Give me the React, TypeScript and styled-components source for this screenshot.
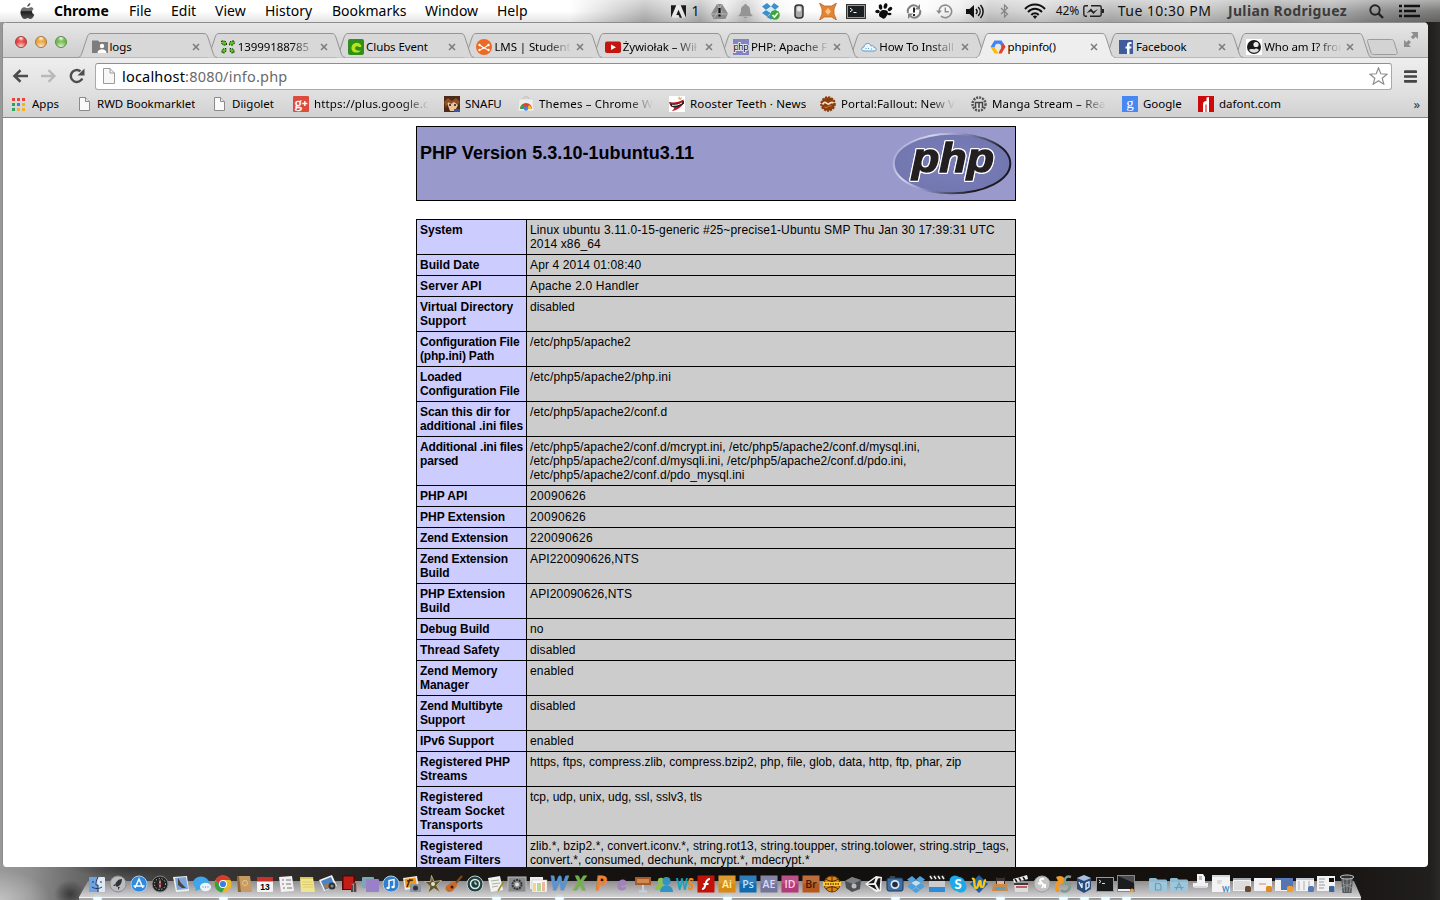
import React from "react";
import styled, { createGlobalStyle, css } from "styled-components";

const GlobalStyle = createGlobalStyle`
  html, body { margin: 0; padding: 0; overflow: hidden; background: #161412; }
  * { box-sizing: border-box; }
`;

const uiFont = `"Noto Sans", "Open Sans", sans-serif`;

/* ---------- desktop ---------- */

const Desktop = styled.div`
  width: 1440px;
  height: 900px;
  overflow: hidden;
  display: flex;
  flex-direction: column;
  font-family: ${uiFont};
  color: #000;
  background:
    radial-gradient(ellipse 16px 14px at 70px 894px, rgba(40, 40, 40, 0.75), transparent),
    radial-gradient(ellipse 60px 10px at 130px 868px, rgba(30, 30, 30, 0.5), transparent),
    radial-gradient(ellipse 50px 30px at 0 900px, rgba(220, 220, 220, 0.6), transparent),
    linear-gradient(90deg, #999 0, #8f8f8f 30px, #6e6e6e 70px, #525252 120px, #3c3b3a 170px, #2e2c2a 300px, #1b1815 440px, #12100e 700px, #14110f 1300px, #211f1d 1430px, #2c2a28 1440px);
`;

const MenuBar = styled.header`
  flex: 0 0 22px;
  height: 22px;
  display: flex;
  align-items: center;
  padding-left: 20px;
  font-size: 14px;
  white-space: nowrap;
  background:
    linear-gradient(180deg, rgba(255, 255, 255, 0.45) 0, rgba(255, 255, 255, 0.12) 50%, rgba(0, 0, 0, 0.1) 100%),
    linear-gradient(90deg, #fff 0, #fff 570px, #e2e2e2 600px, #b4b4b4 645px, #d0d0d0 675px, #b2b2b2 700px, #e8e8e8 725px, #c4c4c4 745px, #f0f0f0 765px, #fff 800px, #fbfbfb 925px, #ececec 960px, #c4c4c4 990px, #d4d4d4 1040px, #b0b0b0 1110px, #c6c6c6 1190px, #9a9a9a 1270px, #a4a4a4 1330px, #868686 1370px, #6c6b6a 1440px);
`;

const MenuItem = styled.span<{ $w: number; $bold?: boolean }>`
  flex: 0 0 ${(p) => p.$w}px;
  height: 22px;
  display: flex;
  align-items: center;
  font-weight: ${(p) => (p.$bold ? 700 : 400)};
  line-height: 22px;
`;

const StatusItem = styled.span<{ $w: number; $size?: number; $color?: string; $bold?: boolean; $ls?: number }>`
  flex: 0 0 ${(p) => p.$w}px;
  min-width: 0;
  display: flex;
  justify-content: center;
  align-items: center;
  height: 22px;
  line-height: 22px;
  font-size: ${(p) => p.$size ?? 14}px;
  font-weight: ${(p) => (p.$bold ? 700 : 400)};
  letter-spacing: ${(p) => p.$ls ?? 0}px;
  color: ${(p) => p.$color ?? "#111"};
  svg { flex: none; }
`;

/* ---------- browser window ---------- */

const BrowserWindow = styled.main`
  flex: 0 0 845px;
  height: 845px;
  width: 1426px;
  margin-left: 2px;
  border-left: 1px solid #8d8d8d;
  border-radius: 5px 5px 4px 4px;
  overflow: hidden;
  display: flex;
  flex-direction: column;
  background: #fff;
`;

const TabStrip = styled.div`
  flex: 0 0 36px;
  display: flex;
  align-items: flex-end;
  border-top: 1px solid #8c8c8c;
  background: linear-gradient(180deg, #e6e6e6, #cdcdcd);
  box-shadow: inset 0 -1px 0 #9a9a9a;
`;

const TrafficLights = styled.div`
  flex: 0 0 75px;
  height: 33px;
  padding-left: 12px;
  display: flex;
  gap: 8px;
  align-items: center;
`;

const Light = styled.span<{ $c: string; $edge: string }>`
  width: 12px;
  height: 12px;
  border-radius: 50%;
  border: 1px solid ${(p) => p.$edge};
  background: radial-gradient(circle at 50% 12%, #fff 0, rgba(255, 255, 255, 0.2) 25%, transparent 40%),
    radial-gradient(circle at 50% 105%, rgba(255, 255, 255, 0.7), ${(p) => p.$c} 55%);
`;

const TabBox = styled.div<{ $z: number }>`
  flex: 0 0 128.3px;
  height: 25px;
  position: relative;
  z-index: ${(p) => p.$z};
  display: flex;
  align-items: center;
  padding: 2px 0 0 13.5px;
`;

const TabShape = styled.svg`
  position: absolute;
  left: 0;
  top: 0;
  overflow: visible;
`;

const Favicon = styled.span`
  position: relative;
  flex: 0 0 16px;
  height: 16px;
  svg { display: block; }
`;

const fade = css`
  mask-image: linear-gradient(90deg, #000 calc(100% - 26px), transparent);
`;

const TabTitle = styled.span<{ $fade?: boolean }>`
  position: relative;
  flex: 0 0 78px;
  margin-left: 2px;
  overflow: hidden;
  white-space: nowrap;
  font-size: 11.5px;
  line-height: 18px;
  letter-spacing: -0.1px;
  ${(p) => p.$fade && fade}
`;

const CloseMark = styled.svg`
  position: relative;
  margin-left: 4px;
`;

const NewTab = styled.svg`
  flex: none;
  margin: 0 0 3px 5.5px;
`;

const FullScreen = styled.svg`
  flex: none;
  margin: 0 0 11px 6px;
`;

const Toolbar = styled.div`
  flex: 0 0 34px;
  display: flex;
  align-items: center;
  padding: 2px 0 0 9px;
  background: linear-gradient(180deg, #eeeeee, #e0e0e0);
`;

const ToolIcon = styled.svg<{ $ml?: number }>`
  flex: none;
  margin-left: ${(p) => p.$ml ?? 0}px;
`;

const Omnibox = styled.div`
  flex: 0 0 1297px;
  height: 27px;
  margin-left: 10px;
  border: 1px solid #a9a9a9;
  border-top-color: #8f8f8f;
  border-radius: 3px;
  background: #fff;
  display: flex;
  align-items: center;
  padding: 0 3px 0 7px;
`;

const Url = styled.span`
  flex: 1;
  margin-left: 7px;
  font-size: 14.5px;
  letter-spacing: 0.2px;
  line-height: 24px;
  color: #6b6b6b;
  b { font-weight: 400; color: #000; }
`;

const BookmarksBar = styled.nav`
  flex: 0 0 26px;
  display: flex;
  align-items: center;
  padding: 0 0 2px 8px;
  border-bottom: 1px solid #868686;
  background: linear-gradient(180deg, #e0e0e0, #d1d1d1);
`;

const Bookmark = styled.a<{ $w: number }>`
  flex: 0 0 ${(p) => p.$w}px;
  display: flex;
  align-items: center;
  svg { flex: none; }
`;

const BookmarkText = styled.span<{ $fade?: boolean; $ls?: number }>`
  margin-left: 5px;
  max-width: ${(p) => (p.$fade ? 116 : 120)}px;
  overflow: hidden;
  white-space: nowrap;
  font-size: 11.5px;
  line-height: 18px;
  letter-spacing: ${(p) => p.$ls ?? 0}px;
  ${(p) => p.$fade && fade}
`;

const Overflow = styled.span`
  font-size: 13px;
  line-height: 16px;
  color: #333;
  margin-left: auto;
  margin-right: 8px;
`;

/* ---------- page ---------- */

const Page = styled.section`
  flex: 1;
  overflow: hidden;
  padding: 8px 0 0 413px;
  font-family: "Liberation Sans", Arial, sans-serif;
`;

const PhpHeader = styled.div`
  width: 600px;
  height: 75px;
  border: 1px solid #000;
  background: #9999cc;
  display: flex;
  justify-content: space-between;
  padding: 3px;
`;

const PhpTitle = styled.h1`
  margin: 12px 0 0;
  font-size: 18px;
  line-height: 22px;
  font-weight: 700;
  letter-spacing: 0.04px;
`;

const LogoText = styled.text`
  filter: drop-shadow(1px 0 0 #fff) drop-shadow(-1px 0 0 #fff) drop-shadow(0 1px 0 #fff) drop-shadow(0 -1px 0 #fff);
`;

const InfoTable = styled.div`
  width: 600px;
  margin-top: 18px;
  padding: 1px;
  display: grid;
  grid-template-columns: 109px 488px;
  gap: 1px;
  background: #000;
  font-size: 12px;
  line-height: 14px;
`;

const Cell = styled.div<{ $ls?: number }>`
  padding: 3px 0 3px 3px;
  white-space: pre;
  letter-spacing: ${(p) => p.$ls ?? 0}px;
`;

const Key = styled(Cell)`
  background: #ccccff;
  font-weight: 700;
`;

const Value = styled(Cell)`
  background: #cccccc;
`;

/* ---------- dock ---------- */

const DockArea = styled.footer`
  flex: 0 0 33px;
  position: relative;
  padding-left: 86.5px;
  display: flex;
`;

const Shelf = styled.svg`
  position: absolute;
  left: 0;
  top: 0;
`;

const DockItem = styled.span`
  position: relative;
  flex: 0 0 21px;
  height: 33px;
  padding-top: 8px;
  display: flex;
  justify-content: center;
  align-items: flex-start;
`;

const DockGap = styled.span`
  flex: 0 0 11px;
`;

const Running = styled.i`
  position: absolute;
  left: 6px;
  bottom: 0;
  width: 9px;
  height: 3px;
  border-radius: 3px;
  background: #f4fdff;
  box-shadow: 0 -1px 3px 0 #c4ecfa;
`;

/* ---------- icons ---------- */

const DocIcon = ({ size = 16 }: { size?: number }) => (
  <svg width={size} height={size} viewBox="0 0 16 16">
    <path d="M3.500 1.500h6l4 4v9h-10z" fill="#fafafa" stroke="#8a8a8a" />
    <path d="M9.500 1.500v4h4" fill="#e8e8e8" stroke="#8a8a8a" />
  </svg>
);

const favs: Record<string, React.ReactNode> = {
  logs: (
    <>
      <path d="M0 1.500h6l1.500 1.500H16v11H0z" fill="#7d7d7d" />
      <circle cx="10" cy="7" r="2.200" fill="#fff" />
      <path d="M5.500 14c0-5 9-5 9 0z" fill="#fff" />
    </>
  ),
  clover: (
    <g fill="#5cc81e" stroke="#123a08" strokeWidth="1" strokeDasharray="2 1">
      <path d="M1.500 2h3.500l1.500 2v2H3L1.500 4z" />
      <path d="M14 2h-3L9.500 4v2H13l1.500-2z" />
      <path d="M2 13.500V11l2-1.500h2V12l-1.500 2z" />
      <path d="M14 13.500V11l-2-1.500h-2V12l1.500 2z" />
    </g>
  ),
  clubs: (
    <>
      <rect width="16" height="16" rx="2" fill="#2f8f1a" />
      <path d="M13.500 8C13 4 9 3 6 4.500 2 7 3 13 7 13.500c3 .3 5-.5 6-2-3 .5-6 0-6-2.500C7.500 7 10 7 11 8z" fill="#b7e51c" />
    </>
  ),
  lms: (
    <>
      <circle cx="8" cy="8" r="8" fill="#ee6a24" />
      <path d="M3.500 6L8 9l4.500-3M3.500 11L8 9M12.500 11L8 9" stroke="#fff" strokeWidth="1.200" fill="none" />
      <circle cx="3.500" cy="6" r="1.200" fill="#fff" /><circle cx="12.500" cy="6" r="1.200" fill="#fff" />
      <circle cx="3.500" cy="11" r="1.200" fill="#fff" /><circle cx="12.500" cy="11" r="1.200" fill="#fff" />
    </>
  ),
  youtube: (
    <>
      <rect y="2.500" width="16" height="11.500" rx="2" fill="#c4150f" />
      <path d="M6 5.500v5.500l5-2.700z" fill="#fff" />
    </>
  ),
  php: (
    <>
      <rect width="16" height="16" fill="#8184c0" />
      <text x="0.500" y="11" fontFamily="Liberation Sans" fontSize="9.500" textLength="15" stroke="#fff" strokeWidth="1.600" paintOrder="stroke" fill="#000">php</text>
    </>
  ),
  cloud: (
    <>
      <path d="M3 12C0 12 0 8 3 8c0-4 6-5 7-1 2-1 3 0 3 1.500 3 0 3 3.500 0 3.500z" fill="#eef6fb" stroke="#55a0d0" />
      <path d="M4.500 9.500h1M7 9.500h1M10 10h1" stroke="#55a0d0" />
    </>
  ),
  cloudplat: (
    <>
      <path d="M4.500 1.500h7L15.500 8h-4L8 4.500 4.500 8h-4z" fill="#4285f4" />
      <path d="M13 4l2.500 4-4 6.500h-3L11 8z" fill="#e0442f" />
      <path d="M.5 8l4 6.500h4L5 8z" fill="#fbbc05" />
      <circle cx="8" cy="8" r="3.200" fill="#e6e6e6" />
    </>
  ),
  facebook: (
    <>
      <rect x="1" y="1" width="14" height="14" fill="#3f5d9c" />
      <path d="M9 15V9.500H7.500v-2H9V6c0-2 1-3 3-3h1.500v2H12.300c-.7 0-.8.4-.8 1v1.500h2l-.3 2h-1.700V15z" fill="#fff" />
    </>
  ),
  who: (
    <>
      <rect width="16" height="16" fill="#fff" />
      <circle cx="8" cy="8" r="7" fill="#1a1a1a" />
      <circle cx="10" cy="5.500" r="2.600" fill="#eee" />
      <path d="M3 11c2-2 5 0 6-1s3 0 4 1c-1 3-8 4-10 0z" fill="#ddd" />
    </>
  ),
  apps: (
    <>
      {["#e8443a", "#e8443a", "#e8443a", "#2fa35a", "#3b7ded", "#f5b02e", "#2fa35a", "#f5b02e", "#f5b02e"].map((c, i) => (
        <rect key={i} x={1 + (i % 3) * 5} y={2 + Math.floor(i / 3) * 5} width="3" height="3" fill={c} />
      ))}
    </>
  ),
  gplus: (
    <>
      <rect width="16" height="16" rx="1" fill="#dc4b3b" />
      <text x="1.500" y="12" fontFamily="Liberation Serif" fontSize="15" fill="#fff" stroke="#fff" strokeWidth=".4">g</text>
      <path d="M11.800 5v5M9.300 7.500h5" stroke="#fff" strokeWidth="1.400" />
    </>
  ),
  snafu: (
    <>
      <rect width="16" height="16" fill="#4d2a17" />
      <path d="M3 7l4-2 5 1 2 3-3 6H6z" fill="#eec39a" />
      <path d="M0 6l4-4 4 3 4-3 4 4-2 3-4-3-3 2-3-2-2 6z" fill="#8d5326" />
      <path d="M5 9h2M10 9h2" stroke="#222" strokeWidth="1.500" />
      <path d="M10 13h6v3h-6z" fill="#3a55a0" />
    </>
  ),
  themes: (
    <>
      <path d="M5 3c0-3 6-3 6 0" stroke="#bbb" fill="none" />
      <path d="M1 3h14l1 12H0z" fill="#ededed" stroke="#ccc" strokeWidth=".5" />
      <path d="M2 13a6 6 0 0 1 12 0z" fill="#e2402e" />
      <path d="M2 13a6 6 0 0 1 3-5l2 5z" fill="#2ea650" />
      <path d="M14 13a6 6 0 0 0-3-4l-2 4z" fill="#fbc116" />
      <circle cx="8" cy="12.500" r="2.200" fill="#4285f4" />
    </>
  ),
  rooster: (
    <>
      <rect width="16" height="16" fill="#fff" />
      <path d="M9 3l1-3 1 2 2-1-1 3z" fill="#d6b77a" />
      <path d="M0 6c5 1 10 0 14.500-2.500L15 7c-3 4-6 7-12 8l2.500-3C2.500 11 .5 9 0 6z" fill="#bd1220" />
      <path d="M1 7.500c5 1.500 10 0 14-2.500v2.500c-4 3.500-9 4.500-13 3z" fill="#222" />
      <path d="M3 9.300c4 .3 7-.6 10-2.500" stroke="#fff" fill="none" />
    </>
  ),
  portal: (
    <>
      <circle cx="8" cy="8" r="6.800" fill="#8c3d0c" stroke="#8c3d0c" strokeWidth="2" strokeDasharray="2 1.200" />
      <path d="M2.500 8.500c2-4 4-1 5.500-.5s3-3 5.500-1" stroke="#f6dfc8" strokeWidth="1.700" fill="none" />
      <path d="M4.500 11c2 .8 3 .3 4-.5s2-.8 3-.5" stroke="#c98a5a" fill="none" />
    </>
  ),
  manga: (
    <>
      <circle cx="8" cy="8" r="6.500" fill="#dcdcdc" stroke="#555" strokeWidth="2.500" strokeDasharray="2 1" />
      <path d="M4.500 12V6.500h7V12M8 6.500V12" stroke="#444" strokeWidth="1.500" fill="none" />
    </>
  ),
  google: (
    <>
      <rect width="16" height="16" fill="#4787f2" />
      <text x="4.300" y="12" fontFamily="Liberation Serif" fontSize="15" fill="#fff">g</text>
    </>
  ),
  dafont: (
    <>
      <rect width="16" height="16" fill="#cc0a0d" />
      <path d="M8.500 1.500L11 1v15H8.500V8.500H7.500V16H5V8c0-2 1.500-3 3.500-3z" fill="#fff" />
    </>
  ),
};

const Fav = ({ name }: { name: string }) =>
  name === "doc" ? (
    <DocIcon />
  ) : (
    <svg width="16" height="16" viewBox="0 0 16 16">{favs[name]}</svg>
  );

const AppleIcon = () => (
  <svg width="15" height="17" viewBox="0 0 16 18">
    <defs>
      <linearGradient id="apple" x1="0" y1="0" x2="0" y2="1">
        <stop offset="0" stopColor="#444" /><stop offset=".45" stopColor="#777" /><stop offset=".55" stopColor="#1d1d1d" /><stop offset="1" stopColor="#555" />
      </linearGradient>
    </defs>
    <path fill="url(#apple)" d="M11 0c.2 2-1.400 4-3.300 4C7.500 2.200 9.200.4 11 0zM14.500 6.200c-2.500 1.600-2 5 .8 6.100-.7 2-2.200 4.700-3.900 4.700-1.200 0-1.700-.8-3.200-.8s-2 .8-3.200.8C2.700 17 .5 12.800.5 9.700c0-3.200 2-5.200 4.200-5.200 1.400 0 2.400.9 3.500.9s2-.9 3.700-.9c1 0 2 .6 2.600 1.700z" />
  </svg>
);

const Tab = ({ icon, title, active, fades, z }: { icon: string; title: string; active?: boolean; fades?: boolean; z: number }) => (
  <TabBox $z={active ? 30 : z}>
    <TabShape width="140" height="25" viewBox="0 0 140 25">
      <path
        d="M0 24.500C3 24 3 22 4 20L9 4.500C10 1.500 11 .5 13 .5H126C128 .5 129 1.500 130 4.500L135 20C136 22 136 24 139 24.500"
        fill={active ? "#eeeeee" : "#d8d8d8"}
        stroke="#949494"
      />
      {active && <path d="M1 24.500h137" stroke="#eeeeee" strokeWidth="1.500" />}
    </TabShape>
    <Favicon><Fav name={icon} /></Favicon>
    <TabTitle $fade={fades}>{title}</TabTitle>
    <CloseMark width="8" height="8" viewBox="0 0 8 8">
      <path d="M1 1l6 6M7 1L1 7" stroke="#7b7b7b" strokeWidth="1.500" />
    </CloseMark>
  </TabBox>
);

const tabs = [
  { icon: "logs", title: "logs" },
  { icon: "clover", title: "13999188785", fades: true },
  { icon: "clubs", title: "Clubs Event" },
  { icon: "lms", title: "LMS | Student", fades: true },
  { icon: "youtube", title: "Żywiołak – Wił", fades: true },
  { icon: "php", title: "PHP: Apache F", fades: true },
  { icon: "cloud", title: "How To Install", fades: true },
  { icon: "cloudplat", title: "phpinfo()", active: true },
  { icon: "facebook", title: "Facebook" },
  { icon: "who", title: "Who am I? from", fades: true },
];

const bookmarks = [
  { icon: "apps", text: "Apps", w: 65 },
  { icon: "doc", text: "RWD Bookmarklet", w: 135 },
  { icon: "doc", text: "Diigolet", w: 82 },
  { icon: "gplus", text: "https://plus.google.c", w: 151, fades: true, ls: 0.15 },
  { icon: "snafu", text: "SNAFU", w: 74 },
  { icon: "themes", text: "Themes – Chrome W", w: 151, fades: true, ls: 0.15 },
  { icon: "rooster", text: "Rooster Teeth · News", w: 151, ls: 0.15 },
  { icon: "portal", text: "Portal:Fallout: New V", w: 151, fades: true, ls: 0.1 },
  { icon: "manga", text: "Manga Stream – Rea", w: 151, fades: true, ls: 0.15 },
  { icon: "google", text: "Google", w: 76 },
  { icon: "dafont", text: "dafont.com", w: 100 },
];

/* label, value, letter spacing of the value, letter spacing of the label */
const info: [string, string, number?, number?][] = [
  ["System", "Linux ubuntu 3.11.0-15-generic #25~precise1-Ubuntu SMP Thu Jan 30 17:39:31 UTC\n2014 x86_64", 0.14],
  ["Build Date", "Apr 4 2014 01:08:40", 0.13],
  ["Server API", "Apache 2.0 Handler", 0.16, 0.15],
  ["Virtual Directory\nSupport", "disabled"],
  ["Configuration File\n(php.ini) Path", "/etc/php5/apache2", 0.12, -0.18],
  ["Loaded\nConfiguration File", "/etc/php5/apache2/php.ini", 0.14, -0.18],
  ["Scan this dir for\nadditional .ini files", "/etc/php5/apache2/conf.d", 0.1, -0.08],
  ["Additional .ini files\nparsed", "/etc/php5/apache2/conf.d/mcrypt.ini, /etc/php5/apache2/conf.d/mysql.ini,\n/etc/php5/apache2/conf.d/mysqli.ini, /etc/php5/apache2/conf.d/pdo.ini,\n/etc/php5/apache2/conf.d/pdo_mysql.ini", 0.08, -0.18],
  ["PHP API", "20090626", 0.33],
  ["PHP Extension", "20090626", 0.33],
  ["Zend Extension", "220090626", 0.33, -0.1],
  ["Zend Extension\nBuild", "API220090626,NTS", 0.14, -0.1],
  ["PHP Extension\nBuild", "API20090626,NTS", 0.14],
  ["Debug Build", "no", 0, -0.1],
  ["Thread Safety", "disabled", 0.1],
  ["Zend Memory\nManager", "enabled", 0.15, -0.05],
  ["Zend Multibyte\nSupport", "disabled", 0.1, -0.15],
  ["IPv6 Support", "enabled", 0.15],
  ["Registered PHP\nStreams", "https, ftps, compress.zlib, compress.bzip2, php, file, glob, data, http, ftp, phar, zip", 0.02],
  ["Registered\nStream Socket\nTransports", "tcp, udp, unix, udg, ssl, sslv3, tls", 0, 0.1],
  ["Registered\nStream Filters", "zlib.*, bzip2.*, convert.iconv.*, string.rot13, string.toupper, string.tolower, string.strip_tags,\nconvert.*, consumed, dechunk, mcrypt.*, mdecrypt.*", 0.07, 0.05],
];

const PhpLogo = () => (
  <svg width="120" height="67" viewBox="0 0 120 67">
    <defs>
      <linearGradient id="rim" x1="0" y1="0" x2="1" y2=".35">
        <stop offset="0" stopColor="#8f92c4" /><stop offset=".3" stopColor="#d4d6ee" /><stop offset=".55" stopColor="#8588b8" /><stop offset=".9" stopColor="#1d1a22" />
      </linearGradient>
      <radialGradient id="body"><stop offset="0" stopColor="#7b7fbb" /><stop offset="1" stopColor="#7377b0" /></radialGradient>
    </defs>
    <ellipse cx="60" cy="33.500" rx="58.300" ry="29.800" fill="url(#body)" stroke="url(#rim)" strokeWidth="2" />
    <LogoText x="20" y="42" fontFamily="Liberation Sans" fontWeight="700" fontStyle="italic" fontSize="40" textLength="82" lengthAdjust="spacingAndGlyphs" fill="#231f20" stroke="#231f20" strokeWidth="1.300">php</LogoText>
  </svg>
);

/* ---------- dock artwork, drawn on an 18×18 grid ---------- */

const Tile = ({ c, t, tc }: { c: string; t: string; tc: string }) => (
  <>
    <rect x=".5" y=".5" width="17" height="17" fill={c} />
    <path d="M.5 .5h17v8H.5z" fill="#fff" opacity=".12" />
    <text x="9" y="13" textAnchor="middle" fontFamily="Open Sans" fontWeight="600" fontSize="10.500" fill={tc}>{t}</text>
  </>
);

const Disc = ({ c, rim = "#ccc", children }: { c: string; rim?: string; children?: React.ReactNode }) => (
  <>
    <circle cx="9" cy="9" r="8" fill={c} stroke={rim} />
    {children}
  </>
);

const Sheet = ({ badge, head = "#f4f4f4", children }: { badge: string; head?: string; children?: React.ReactNode }) => (
  <>
    <rect x="0" y="3" width="18" height="13" fill="#f2f2f2" />
    <rect x="0" y="3" width="18" height="2" fill={head} />
    {children}
    <rect x="12" y="11" width="6" height="6" rx="1.500" fill={badge} />
  </>
);

const Folder = ({ children }: { children: React.ReactNode }) => (
  <>
    <path d="M0 4l1-1h6l1.500 1.500H17l1 1V16l-1 1H1l-1-1z" fill="#8fb9cf" />
    <path d="M0 7h18v9l-1 1H1l-1-1z" fill="#9dc6da" />
    <g fill="none" stroke="#6d9cb6" strokeWidth="1.200">{children}</g>
  </>
);

const Letter = ({ t, c }: { t: string; c: string }) => (
  <text x="9" y="15" textAnchor="middle" fontFamily="Lato" fontStyle="italic" fontWeight="900" fontSize="18" fill={c} stroke={c} strokeWidth=".8">{t}</text>
);

const appIcons: { art: React.ReactNode; run?: boolean }[] = [
  { run: true, art: <><rect x="1" y="2" width="16" height="15" rx="1" fill="#dfe9f5" /><path d="M1 2h9c-2 4-2 6-2 8h2c0 3 0 5 .5 7H1z" fill="#6fa3e0" /><path d="M5 6v2M13 6v2M4 12c3 2 7 2 10 0M10 2C8 6 8 8 8 10h2v7" stroke="#1d3564" fill="none" /></> },
  { art: <Disc c="#b9bcc0" rim="#8e8e8e"><path d="M13 4c-4 0-6 3-7 6l2 2c3-1 5-4 5-8zM6 9l-2 2 2 0M9 12v3l2-3" fill="#333" /></Disc> },
  { art: <Disc c="#2c8ae0" rim="#a9c9e6"><path d="M5 13l4-9 4 9M3.500 11h11" stroke="#fff" strokeWidth="1.500" fill="none" /></Disc> },
  { art: <Disc c="#222" rim="#888"><circle cx="9" cy="9" r="5.500" fill="none" stroke="#ddd" strokeDasharray="1 2" /><path d="M9 4l1 5-1 5-1-5z" fill="#eee" /><circle cx="9" cy="9" r="1.500" fill="#c33" /></Disc> },
  { art: <><path d="M1 2l14-1 2 15-13 1z" fill="#eee" /><path d="M3 3l11-1 2 12-11 1z" fill="#7ba5dc" /><path d="M6 3l3 5 5 5-4 0-4-3z" fill="#4c4438" /></> },
  { art: <><ellipse cx="8" cy="8" rx="8" ry="6.500" fill="#3fa5ec" /><path d="M3 12l-1 4 5-2z" fill="#3fa5ec" /><ellipse cx="12.500" cy="12" rx="5.500" ry="4.200" fill="#eef5fa" /><path d="M9.500 12h1M12 12h1M14.500 12h1" stroke="#6ab" strokeWidth="1.300" /></> },
  { run: true, art: <><circle cx="9" cy="9" r="8.500" fill="#e8b923" /><path d="M1.600 5A8.500 8.500 0 0 1 16.500 5H9L6 11z" fill="#d93a2b" /><path d="M1.600 5A8.500 8.500 0 0 0 8 17.500l3.500-6.500L6 11z" fill="#37a149" /><circle cx="9" cy="9" r="4" fill="#fff" /><circle cx="9" cy="9" r="3.100" fill="#3c7fe0" /></> },
  { art: <><path d="M2 1h13l2 16H3z" fill="#c79a62" /><path d="M2 1h2l2 16H3z" fill="#8d6435" /><circle cx="10" cy="8" r="2.500" fill="none" stroke="#e2c79b" /></> },
  { art: <><rect x="1" y="2" width="16" height="15" rx="1" fill="#f5f5f5" /><path d="M1 2h16v4.500H1z" fill="#c9302c" /><text x="9" y="14.500" textAnchor="middle" fontFamily="Liberation Sans" fontWeight="700" fontSize="8.500">13</text></> },
  { art: <><path d="M2 2l13-1 2 15-13 1z" fill="#f1f1f1" /><path d="M5 5h2M5 9h2M6 13h2M9 5h5M9 9h5M10 13h5" stroke="#777" strokeWidth="1.100" /></> },
  { art: <><path d="M2 2h13l2 15H3z" fill="#f1e58c" /><path d="M2 2h13v2H2z" fill="#d8c65c" /><path d="M4 7h10M4 9.500h11M5 12h10" stroke="#c9bb63" strokeWidth=".6" /></> },
  { art: <><path d="M0 5l13-5 5 11-13 5z" fill="#f4f4f4" /><path d="M2 6l10-4 4 9-10 4z" fill="#4c83c4" /><path d="M5 11l4-3 5 2-7 4z" fill="#a77a4b" /><circle cx="13" cy="11" r="3.500" fill="#333" /><circle cx="13" cy="11" r="1.500" fill="#889" /></> },
  { art: <><path d="M2 0h13v15H2z" fill="#4a0b0b" /><path d="M3.500 1.500h10V14h-10z" fill="#c41c16" /><path d="M11 10l6-4v11h-6z" fill="#a88" /><path d="M12 10v7M15 8v9" stroke="#222" strokeWidth="1.300" /></> },
  { art: <><rect x="1" y="2" width="12" height="11" rx="1" fill="#7ba7b9" /><rect x="5" y="4" width="13" height="13" rx="1" fill="#9a80c6" /></> },
  { art: <Disc c="#2f7fd0" rim="#b8cbe0"><path d="M7 13V5.500l5-1V12" stroke="#fff" strokeWidth="1.400" fill="none" /><ellipse cx="6" cy="13" rx="1.700" ry="1.300" fill="#fff" /><ellipse cx="11" cy="12" rx="1.700" ry="1.300" fill="#fff" /></Disc> },
  { art: <><path d="M0 3l14-2 2 12-14 2z" fill="#eee" /><path d="M1.500 4l11-1.500L14 11 3 13z" fill="#f19a1f" /><path d="M4 12l3-8M4 6l6-1" stroke="#4b2a08" strokeWidth="1.500" /><rect x="7" y="9" width="11" height="8" rx="1" fill="#8d959d" /><circle cx="12.500" cy="13" r="2.500" fill="#334" /></> },
  { art: <><path d="M7.500.5L10 6.500l7.500-1-5 5 4 7-6.500-4-6 4.500 2-6.500L.5 6.500l6 0z" fill="#5e5636" stroke="#ccc08e" strokeWidth=".8" /><circle cx="9" cy="9" r="2" fill="#e6dfc0" /></> },
  { art: <><path d="M17 1L10 9" stroke="#7d4a1e" strokeWidth="2" /><path d="M10 7c2 1 3 3 1 5s-3 5-7 5c-4-1-5-5-1-7 2-1 3-4 7-3z" fill="#c9692a" /><circle cx="7" cy="12" r="1.500" fill="#3c1a08" /></> },
  { art: <Disc c="#1f3f40" rim="#c8cccc"><circle cx="9" cy="9" r="4.500" fill="none" stroke="#d5efe9" strokeWidth="1.500" /><path d="M9 6.500V9h2" stroke="#fff" fill="none" /></Disc> },
  { run: true, art: <><path d="M1 3l12-2 3 14-12 2z" fill="#f3f3ee" /><path d="M4 6l8-1M5 9l8-1M5 12l6-1" stroke="#999" strokeWidth=".8" /><path d="M17 6l-6 10" stroke="#998d2a" strokeWidth="1.500" /></> },
  { art: <><rect x="0" y="2" width="18" height="15" fill="#888b8e" stroke="#bbb" /><circle cx="9" cy="9.500" r="4.500" fill="none" stroke="#333" strokeWidth="2" strokeDasharray="2 .8" /><circle cx="9" cy="9.500" r="2" fill="#ddd" /></> },
  { art: <><rect x="1" y="2" width="13" height="12" fill="#eee" /><rect x="3" y="5" width="15" height="12" fill="#f8f8f8" stroke="#bbb" strokeWidth=".5" /><path d="M4 8h3v8H4z" fill="#f3d68a" /><path d="M8 8h4v8H8z" fill="#b5d99a" /><path d="M13 7h3v9h-3z" fill="#efb49b" /></> },
  { run: true, art: <Letter t="W" c="#5c93cf" /> },
  { art: <Letter t="X" c="#74b04d" /> },
  { art: <Letter t="P" c="#ea8338" /> },
  { art: <Letter t="e" c="#a382c0" /> },
  { art: <><path d="M1 2h16v8H1z" fill="#a45a2b" /><path d="M3 4h12v4H3z" fill="#d08a51" /><path d="M9 10v6M5 16.500h8" stroke="#c8d2de" strokeWidth="2" /></> },
  { art: <><circle cx="6" cy="6" r="3.200" fill="#8cc152" /><path d="M0 15c0-8 11-8 11 0z" fill="#8cc152" /><circle cx="11.500" cy="6" r="4" fill="#2f94c4" /><path d="M5 17c0-9 13-9 13 0z" fill="#2f94c4" /></> },
  { art: <><defs><linearGradient id="ws"><stop offset=".64" stopColor="#17a4bd" /><stop offset=".64" stopColor="#f28a1d" /></linearGradient></defs><text x="0" y="15" fontFamily="Lato" fontWeight="900" fontSize="17" textLength="18" lengthAdjust="spacingAndGlyphs" fill="url(#ws)">WS</text></> },
  { art: <><rect x=".5" y=".5" width="17" height="17" fill="#c11207" /><path d="M13 4c-4 0-4 4-5 7-.5 2-1.500 3-3 3M6.500 9h5" stroke="#fff" strokeWidth="2" fill="none" /></> },
  { run: true, art: <Tile c="#d98a12" t="Ai" tc="#fff3b0" /> },
  { art: <Tile c="#0f6cb0" t="Ps" tc="#bfe6ff" /> },
  { art: <Tile c="#72749c" t="AE" tc="#dcdcf5" /> },
  { art: <Tile c="#b23a78" t="ID" tc="#ffd0e6" /> },
  { art: <Tile c="#b5581f" t="Br" tc="#3d1a05" /> },
  { art: <Disc c="#d58a16" rim="#7a3c0c"><path d="M9 1v16M3 4c4 3 8 3 12 0M3 14c4-3 8-3 12 0" stroke="#5d1d05" fill="none" /><path d="M0 7h18v4H0z" fill="#f5cf31" /><path d="M2 9h14" stroke="#7a2b08" strokeWidth="1.500" strokeDasharray="1.500 1" /></Disc> },
  { art: <><path d="M1 6l7-4 9 3-1 9-8 3-6-4z" fill="#4d4f52" /><path d="M1 6l7-4 9 3-8 4z" fill="#7b7e82" /><circle cx="10" cy="11" r="2.500" fill="#bbb" /></> },
  { art: <><path d="M0 9l11-8 6 1-1 14-5 1z" fill="#f2f2f2" /><path d="M3 8.500L10.500 3 9 8zM3 10h6.500l2.500 5zM11 8.500L13 3.500l2.500-.5L14.500 15z" fill="#161616" /></> },
  { run: true, art: <><rect x="1" y="3" width="16" height="13" rx="2" fill="#3a6ea5" stroke="#203750" /><circle cx="9" cy="9.500" r="4.500" fill="#dde6ee" /><circle cx="9" cy="9.500" r="2.800" fill="#1c2f48" /><path d="M4 2h5" stroke="#444" strokeWidth="2" /></> },
  { art: <g fill="#4ba1df"><path d="M5 1L0 4.500 4.500 8 9 4.500zM13 1l5 3.500L13.500 8 9 4.500zM4.500 8L0 11.500 5 15l4-3.500zM13.500 8l4.500 3.500L13 15l-4-3.500z" /><path d="M5 15.500l4-3 4 3L9 18z" /><path d="M4.500 8L9 5l4.500 3L9 11z" fill="#bfe0f6" /></g> },
  { art: <><path d="M1 0h16v6H1z" fill="#1b1b1b" /><path d="M2 1l2 3M6 1l2 3M10 1l2 3M14 1l2 3" stroke="#eee" strokeWidth="1.500" /><rect x="1" y="6" width="16" height="6" fill="#c9ccd0" /><rect x="1" y="12" width="16" height="5" fill="#2d8bd8" /></> },
  { art: <><circle cx="6" cy="6" r="5.500" fill="#1ca9ea" /><circle cx="12" cy="12" r="5.500" fill="#1ca9ea" /><circle cx="9" cy="9" r="7.300" fill="#1ca9ea" /><text x="9" y="13.500" textAnchor="middle" fontFamily="Lato" fontWeight="900" fontSize="13" fill="#fff">S</text></> },
  { art: <><path d="M9 0l9 9-9 9-9-9z" fill="#1f5f9e" /><path d="M2 4c4-2 1 9 4 9s2-7 4-7-1 6 2 6 1-6 4-7" stroke="#f5c51c" strokeWidth="2.400" fill="none" /></> },
  { run: true, art: <><path d="M2 9h14l1 7H1z" fill="#c98b4b" /><path d="M5 9V2l2 1h5l2-1v7z" fill="#3a3030" /><path d="M6 6h7v3H6z" fill="#e6b692" /><path d="M4 12h10v3H4z" fill="#5b9fc7" /></> },
  { art: <><path d="M1 4l14-4 1 4L2 8z" fill="#eee" /><path d="M3 4l2 3M7 3l2 3M11 2l2 3" stroke="#222" strokeWidth="1.600" /><path d="M2 8h14v9H3z" fill="#ddd" /><path d="M2 8h14v2H2z" fill="#3b3b3b" /><path d="M4 12h11" stroke="#b33" strokeWidth="1.500" /></> },
  { art: <Disc c="#c5c5c5" rim="#a0a0a0"><path d="M11 4c-3-1-5 1-3 3s3 3 1 6M5 8l3 1M12 9v4" stroke="#fff" strokeWidth="2" fill="none" /></Disc> },
  { run: true, art: <><path d="M2 2c6-3 10 1 8 5-2 2-4 2-5 3-1 2 0 4 1 7H2c-2-5-1-9 2-11z" fill="#f09a25" /><path d="M17 2c-5-2-8 3-5 6 1 2 4 2 4 0M16 11c0 5-6 7-9 4" stroke="#7e9c8f" strokeWidth="2.500" fill="none" /></> },
  { run: true, art: <><path d="M9 0l7 3v11l-7 4-7-4V3z" fill="#27497b" /><path d="M2 3l7 3 7-3-7-3z" fill="#a9bfdb" /><path d="M4 7l3 6M7 8v5M11 8v7M11 8l3-1v5l-3 2" stroke="#dce8f6" strokeWidth="1.400" fill="none" /></> },
  { run: true, art: <><rect x=".5" y="2.500" width="17" height="14" fill="#16181a" stroke="#999" /><path d="M3 5l2 1.500L3 8M6 8.500h3" stroke="#ddd" fill="none" /></> },
  { run: true, art: <><rect x=".5" y=".5" width="17" height="16" fill="#1b1c1e" stroke="#888" /><path d="M1 1h16v7z" fill="#494b4e" /><path d="M1 14h12v2H1z" fill="#eee" /><circle cx="15" cy="15.500" r="2" fill="#e5a040" /></> },
];

const stackIcons: React.ReactNode[] = [
  <Folder><path d="M6.500 8.500h4l1.500 2v4.500H6.500z" /></Folder>,
  <Folder><path d="M6 15l3-7 3 7M4.500 12.500h9" /></Folder>,
  <><path d="M6-1h6l2 3v7H6z" fill="#f4f4f4" /><path d="M8 2h3M8 4h3" stroke="#888" /><path d="M2 8h15v4H2z" fill="#f0f0f0" /><path d="M3 11h13v2H3z" fill="#d5d8e2" /></>,
  <><rect x="0" y="0" width="18" height="17" fill="#f3f3f3" /><rect width="18" height="2" fill="#d5d5d5" /><path d="M5 6h5M5 8h4" stroke="#aaa" strokeWidth=".7" /><text x="10" y="17" fontFamily="Lato" fontWeight="900" fontSize="7" fill="#3f8bc9">W</text></>,
  <Sheet badge="#6b4a35" head="#aaa"><path d="M1 6h16v9H1z" fill="#dcdcdc" /></Sheet>,
  <Sheet badge="#e28a1f"><path d="M5 9h7" stroke="#d9634a" strokeWidth=".8" /></Sheet>,
  <Sheet badge="#ee9b31" head="#5979bd"><path d="M6 5h12v10H6z" fill="#5575b5" /></Sheet>,
  <Sheet badge="#5578b8" head="#c5cad4"><path d="M3 6v9M8 6v9M13 6v5" stroke="#aab" /></Sheet>,
  <><rect y="1" width="18" height="15" fill="#f2f2f2" /><path d="M2 4h6M2 7h5M2 10h6M2 13h5" stroke="#999" /><rect x="12" y="3" width="5" height="4" fill="#111" /><rect x="12" y="11" width="5.500" height="6" rx="1" fill="#3d6296" /></>,
  <><path d="M3 2h12l-1.500 16h-9z" fill="#55585b" /><path d="M5 4l1.500 13M9 4v13M13 4l-1.500 13M4 8l10 5M14 8L4 13" stroke="#9a9da0" strokeWidth=".8" /><ellipse cx="9" cy="2" rx="6.800" ry="2" fill="#2f3133" stroke="#c5c8ca" /></>,
];

const DockArt = ({ children }: { children: React.ReactNode }) => (
  <svg width="18" height="18" viewBox="0 0 18 18" overflow="visible">{children}</svg>
);

const menus: [string, number][] = [
  ["File", 42], ["Edit", 44], ["View", 50], ["History", 67], ["Bookmarks", 93], ["Window", 72], ["Help", 171],
];

export default function App() {
  return (
    <Desktop>
      <GlobalStyle />
      <MenuBar>
        <MenuItem $w={34}><AppleIcon /></MenuItem>
        <MenuItem $w={75} $bold>Chrome</MenuItem>
        {menus.map(([t, w]) => <MenuItem key={t} $w={w}>{t}</MenuItem>)}
        <StatusItem $w={21}>
          <svg width="15" height="13" viewBox="0 0 17 14"><rect width="17" height="14" fill="#fff" opacity=".5" /><path d="M0 0h6L0 14zM11 0h6v14zM8.500 5l4 9H10l-1.500-3H6z" fill="#1a1a1a" /></svg>
        </StatusItem>
        <StatusItem $w={13}>1</StatusItem>
        <StatusItem $w={34}>
          <svg width="17" height="15" viewBox="0 0 17 15"><path d="M6 0h5l6 9.500L14.500 15h-12L0 10z" fill="#8b8b8b" /><path d="M6 0l6 10M0 10h17M11 0L3 14" stroke="#b5b5b5" fill="none" /><path d="M8.500 4v5M8.500 10.500v2" stroke="#111" strokeWidth="2.200" /></svg>
        </StatusItem>
        <StatusItem $w={18}>
          <svg width="15" height="15" viewBox="0 0 15 15"><path d="M7.500 0c1 0 1.200.7 1.200 1.300C11 2 12 3.500 12 6c0 3 1 4.500 2.500 5.500v.8H.5v-.8C2 10.500 3 9 3 6c0-2.500 1-4 3.300-4.700C6.300.7 6.500 0 7.500 0zM5.500 13h4c-.5 1.500-3.500 1.500-4 0z" fill="#949494" /></svg>
        </StatusItem>
        <StatusItem $w={34}>
          <svg width="18" height="17" viewBox="0 0 18 17"><g fill="#3b8fcd"><path d="M5 0L0 3.500 4 7l5-3.500zM12 0l5 3.500L13 7 9 3.500zM4 7L0 10l5 3.500L9 10zM13 7l4 3-5 3.500L9 10z" /><path d="M4.500 14L9 11l4 3-4 2.500z" /></g><path d="M4 7l5-3.500L13 7l-4 3z" fill="#d5eaf7" /><circle cx="13" cy="12" r="4.800" fill="#3ea53a" /><path d="M10.500 12l2 2 3.300-4" stroke="#fff" strokeWidth="1.600" fill="none" /></svg>
        </StatusItem>
        <StatusItem $w={22}>
          <svg width="10" height="15" viewBox="0 0 10 15"><rect x="1" y="1" width="8" height="13" rx="3" fill="#aaa" stroke="#333" strokeWidth="1.500" /><rect x="3" y="2.500" width="4" height="5" rx="1.500" fill="#e8e8e8" /></svg>
        </StatusItem>
        <StatusItem $w={36}>
          <svg width="18" height="17" viewBox="0 0 18 17"><path d="M.5 0L5.500 3h7l5-3-2.500 6v5l2.500 6-5-3h-7l-5 3L3 11V6z" fill="#e5842d" stroke="#b56a35" strokeWidth=".8" /><path d="M9 5l3 3.500L9 12 6 8.500z" fill="#f7c48e" /></svg>
        </StatusItem>
        <StatusItem $w={20}>
          <svg width="20" height="15" viewBox="0 0 20 15"><rect x=".5" y=".5" width="19" height="14" fill="#999" stroke="#333" /><rect x="2" y="2" width="16" height="11" fill="#1b1f22" /><path d="M4 4l2.500 2L4 8M7.500 8.500h3" stroke="#fff" fill="none" /></svg>
        </StatusItem>
        <StatusItem $w={36}>
          <svg width="18" height="16" viewBox="0 0 18 16" fill="#0c0c0c"><path d="M4 12c0-3 2-5 5-5s4 1 4 3-1 2-2 4-3 2-4 1-3-1-3-3z" /><ellipse cx="2.500" cy="8.500" rx="2.200" ry="1.800" /><ellipse cx="5.500" cy="4" rx="1.800" ry="2.700" transform="rotate(-10 5.500 4)" /><ellipse cx="10.500" cy="3" rx="1.800" ry="2.900" transform="rotate(15 10.500 3)" /><ellipse cx="15" cy="6" rx="1.700" ry="2.500" transform="rotate(50 15 6)" /><ellipse cx="14.500" cy="11" rx="2" ry="1.300" /></svg>
        </StatusItem>
        <StatusItem $w={24}>
          <svg width="16" height="15" viewBox="0 0 16 15"><path d="M2 9A6 6 0 0 1 11.500 2.700M14 6A6 6 0 0 1 4.500 12.300" stroke="#808080" strokeWidth="2" fill="none" /><path d="M14 0v5.500H9zM2 15V9.500h5z" fill="#808080" /><path d="M8 3.500v5M8 10v2" stroke="#222" strokeWidth="2" /></svg>
        </StatusItem>
        <StatusItem $w={36}>
          <svg width="17" height="15" viewBox="0 0 17 15"><path d="M3 7.500A6.300 6.300 0 1 1 5 12" stroke="#8c8c8c" strokeWidth="1.600" fill="none" /><path d="M0 6.500h6L3 10z" fill="#8c8c8c" /><path d="M9.300 3.500v4.300h3.500" stroke="#8c8c8c" strokeWidth="1.400" fill="none" /></svg>
        </StatusItem>
        <StatusItem $w={25}>
          <svg width="18" height="15" viewBox="0 0 18 15"><path d="M0 5h3.500L8 1v13l-4.500-4H0z" fill="#111" /><path d="M10 5c1.300 1.500 1.300 3.500 0 5M12.200 3c2.500 2.700 2.500 6.500 0 9M14.500 1c3.500 3.700 3.500 9.500 0 13" stroke="#111" strokeWidth="1.500" fill="none" /></svg>
        </StatusItem>
        <StatusItem $w={34}>
          <svg width="9" height="14" viewBox="0 0 9 14"><path d="M1 4l6.500 6L4.500 13V1l3 3L1 10" stroke="#858585" strokeWidth="1.200" fill="none" /></svg>
        </StatusItem>
        <StatusItem $w={28}>
          <svg width="22" height="16" viewBox="0 0 22 16"><path d="M1 6c5.500-6 14.500-6 20 0M4 9c4-4.300 10-4.300 14 0M7.300 12c2-2.300 5.400-2.300 7.400 0" stroke="#111" strokeWidth="2" fill="none" /><path d="M8.800 13.300c1-1.200 3.400-1.200 4.400 0L11 16z" fill="#111" /></svg>
        </StatusItem>
        <StatusItem $w={37} $size={12}>42%</StatusItem>
        <StatusItem $w={16}>
          <svg width="22" height="12" viewBox="0 0 22 12"><path d="M5 .8H2.500C1.500.8.8 1.500.8 2.500v7c0 1 .7 1.700 1.700 1.700H4M8 .8h8.500c1 0 1.700.7 1.700 1.700v7c0 1-.7 1.700-1.700 1.700H7" stroke="#222" strokeWidth="1.400" fill="none" /><path d="M3.500 8L8 3.500l2.500 3L15 4l-4.500 5L8 6.500z" fill="#222" /><path d="M20 4v4" stroke="#222" strokeWidth="2" /></svg>
        </StatusItem>
        <StatusItem $w={125} $ls={0.48}>Tue 10:30 PM</StatusItem>
        <StatusItem $w={121} $bold $color="#3c3c3c" $ls={0.35}>Julian Rodriguez</StatusItem>
        <StatusItem $w={56}>
          <svg width="15" height="15" viewBox="0 0 15 15"><circle cx="6" cy="6" r="4.700" stroke="#222" strokeWidth="1.900" fill="none" /><path d="M9.500 9.500l4.500 4.500" stroke="#222" strokeWidth="2.400" /></svg>
        </StatusItem>
        <StatusItem $w={11}>
          <svg width="21" height="14" viewBox="0 0 21 14"><path d="M0 2h3M0 7h3M0 12h3M5 2h16M5 7h12M5 12h16" stroke="#111" strokeWidth="2.600" /></svg>
        </StatusItem>
      </MenuBar>

      <BrowserWindow>
        <TabStrip>
          <TrafficLights>
            <Light $c="#e8443e" $edge="#a33a36" />
            <Light $c="#f0a33a" $edge="#a8743a" />
            <Light $c="#72bd50" $edge="#5a8a48" />
          </TrafficLights>
          {tabs.map((t, i) => <Tab key={t.title} {...t} z={20 - i} />)}
          <NewTab width="32" height="16" viewBox="0 0 32 16">
            <path d="M2.500.5h23c1 0 2 .5 2.500 2l3 10c.5 2 0 3-1.500 3h-22c-1.500 0-2-.5-2.500-2l-3.500-11c-.3-1.500 0-2 1-2z" fill="#d3d3d3" stroke="#9c9c9c" />
          </NewTab>
          <FullScreen width="14" height="15" viewBox="0 0 14 15">
            <path d="M7 0h7v7l-2.300-2.300L9 7.300 6.700 5l2.700-2.600zM0 8l2.300 2.300L4.700 8 7 10.300 4.600 12.700 7 15H0z" fill="#8e8e8e" />
          </FullScreen>
        </TabStrip>

        <Toolbar>
          <ToolIcon width="17" height="14" viewBox="0 0 17 14"><path d="M16 7H3M8.500 1.200L2.500 7l6 5.800" stroke="#4e4e4e" strokeWidth="2.600" fill="none" /></ToolIcon>
          <ToolIcon $ml={11} width="17" height="14" viewBox="0 0 17 14"><path d="M1 7h13M8.500 1.200l6 5.800-6 5.800" stroke="#b9b9b9" strokeWidth="2.300" fill="none" /></ToolIcon>
          <ToolIcon $ml={12} width="16" height="16" viewBox="0 0 16 16"><path d="M13.300 10.500A6 6 0 1 1 11.500 3.300" stroke="#4e4e4e" strokeWidth="2.400" fill="none" /><path d="M15.500.5v7h-7z" fill="#4e4e4e" /></ToolIcon>
          <Omnibox>
            <svg width="12" height="16" viewBox="0 0 12 16"><path d="M.5.500h6.500l4.500 4.500v10.500H.5z" fill="#f7f7f7" stroke="#9a9a9a" /><path d="M7 .5V5h4.500" fill="none" stroke="#9a9a9a" /></svg>
            <Url><b>localhost</b>:8080/info.php</Url>
            <svg width="19" height="18" viewBox="0 0 19 18"><path d="M9.500 1l2.300 5.800 6.200.4-4.800 4 1.600 6-5.300-3.400-5.300 3.400 1.600-6-4.800-4 6.200-.4z" fill="#fff" stroke="#8d8d8d" strokeWidth="1.200" /></svg>
          </Omnibox>
          <ToolIcon $ml={12} width="13" height="13" viewBox="0 0 13 13"><path d="M1 1.700h11M1 6.500h11M1 11.300h11" stroke="#444" strokeWidth="2.700" strokeLinecap="round" /></ToolIcon>
        </Toolbar>

        <BookmarksBar>
          {bookmarks.map((b) => (
            <Bookmark key={b.text} $w={b.w}>
              <Fav name={b.icon} />
              <BookmarkText $fade={b.fades} $ls={b.ls}>{b.text}</BookmarkText>
            </Bookmark>
          ))}
          <Overflow>»</Overflow>
        </BookmarksBar>

        <Page>
          <PhpHeader>
            <PhpTitle>PHP Version 5.3.10-1ubuntu3.11</PhpTitle>
            <PhpLogo />
          </PhpHeader>
          <InfoTable>
            {info.map(([k, v, ls, keyLs]) => (
              <React.Fragment key={k}>
                <Key $ls={keyLs}>{k}</Key>
                <Value $ls={ls}>{v}</Value>
              </React.Fragment>
            ))}
          </InfoTable>
        </Page>
      </BrowserWindow>

      <DockArea>
        <Shelf width="1440" height="33" viewBox="0 0 1440 33">
          <defs>
            <linearGradient id="shelf" x1="0" y1="0" x2="0" y2="1">
              <stop offset="0" stopColor="#8f8d8e" /><stop offset="1" stopColor="#d2d1d3" />
            </linearGradient>
          </defs>
          <path d="M88 14H1354L1361 30H79z" fill="url(#shelf)" />
          <path d="M79 30H1361V31.500H79z" fill="#f4f4f4" />
          <path d="M79 31.500H1361V33H79z" fill="#a5a5a5" />
        </Shelf>
        {appIcons.map((a, i) => (
          <DockItem key={i}>
            <DockArt>{a.art}</DockArt>
            {a.run && <Running />}
          </DockItem>
        ))}
        <DockGap />
        {stackIcons.map((a, i) => (
          <DockItem key={i}><DockArt>{a}</DockArt></DockItem>
        ))}
      </DockArea>
    </Desktop>
  );
}
